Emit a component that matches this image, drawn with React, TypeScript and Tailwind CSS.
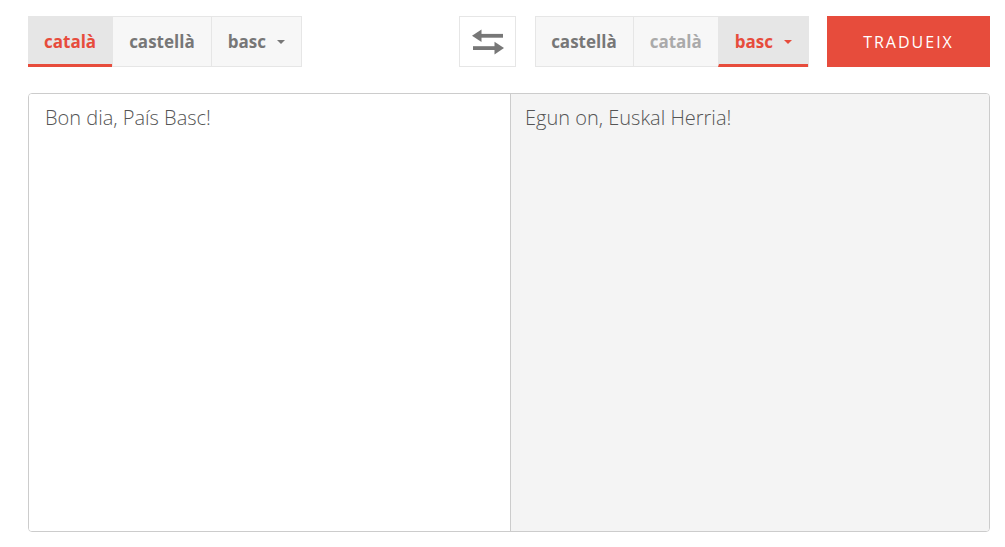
import React from 'react';

const RED = 'text-[#e74c3c]';

const Caret = ({ red }: { red?: boolean }) => (
  <span
    className={`ml-[11px] inline-block h-0 w-0 border-x-[4px] border-t-[4px] border-x-transparent ${
      red ? 'border-t-[#e74c3c]' : 'border-t-[#777]'
    }`}
  />
);

type Tab = { label: string; active?: boolean; disabled?: boolean; caret?: boolean };

const TabGroup = ({ tabs }: { tabs: Tab[] }) => (
  <div className="flex h-[51px] border border-[#e6e6e6] bg-[#f7f7f7]">
    {tabs.map((t, i) => (
      <button
        key={t.label}
        className={`relative -my-px flex items-center px-4 text-[17px] font-bold ${
          i > 0 ? 'border-l border-[#e6e6e6]' : '-ml-px'
        } ${t.active ? `bg-[#e6e6e6] ${RED} border-b-[3px] border-b-[#e74c3c] pt-[3px]` : ''} ${
          t.disabled ? 'text-[#aaa]' : t.active ? '' : 'text-[#777]'
        }`}
      >
        {t.label}
        {t.caret && <Caret red={t.active} />}
      </button>
    ))}
  </div>
);

export default function App() {
  return (
    <div
      className="min-h-[547px] bg-white pl-[28px] pt-[16px]"
      style={{ fontFamily: '"Open Sans", "Liberation Sans", sans-serif' }}
    >
      <div className="w-[962px]">
        <div className="flex items-start">
          <TabGroup
            tabs={[
              { label: 'català', active: true },
              { label: 'castellà' },
              { label: 'basc', caret: true },
            ]}
          />
          <div className="flex-1" />
          <button className="flex h-[51px] w-[57px] items-center justify-center border border-[#e6e6e6] bg-white">
            <svg width="32" height="26" viewBox="0 0 32 26" fill="#777">
              <rect x="7" y="4.9" width="24" height="3.8" />
              <path d="M0 6.8 L9.5 0.5 L9.5 13.1 Z" />
              <rect x="1" y="17.2" width="24" height="3.8" />
              <path d="M32 19.1 L22.5 12.8 L22.5 25.4 Z" />
            </svg>
          </button>
          <div className="ml-[19px]">
            <TabGroup
              tabs={[
                { label: 'castellà' },
                { label: 'català', disabled: true },
                { label: 'basc', active: true, caret: true },
              ]}
            />
          </div>
          <button className="ml-[18px] h-[51px] w-[163px] bg-[#e74c3c] text-[16px] tracking-[2px] text-white">
            TRADUEIX
          </button>
        </div>

        <div className="mt-[26px] flex h-[439px] overflow-hidden rounded-[4px] border border-[#cccccc]">
          <div className="w-[481px] bg-white px-4 pt-[9px] text-[20px] font-light text-[#555]">
            Bon dia, País Basc!
          </div>
          <div className="flex-1 border-l border-[#cccccc] bg-[#f4f4f4] px-[14px] pt-[9px] text-[20px] font-light text-[#555]">
            Egun on, Euskal Herria!
          </div>
        </div>
      </div>
    </div>
  );
}
